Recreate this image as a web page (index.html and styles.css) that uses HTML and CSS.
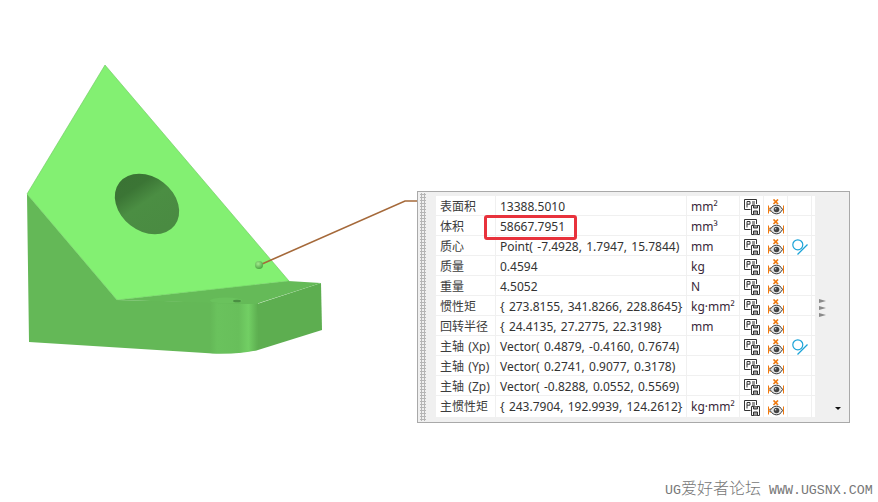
FILE: index.html
```html
<!DOCTYPE html>
<html lang="en">
<head>
  <meta charset="UTF-8" />
  <title>测量结果</title>
  <link rel="stylesheet" href="styles.css">
</head>
<body>
  <svg class="icon-defs" width="0" height="0">
    <symbol id="save" viewBox="0 0 16 16">
      <path d="M6.500 10.500H.5V.5h12v4.500" fill="#fff" stroke="#333" stroke-width="1"/>
      <path d="M3 8.500V2.500h3v2.700H3M8 3h3M8 5h3" fill="none" stroke="#333" stroke-width="1"/>
      <path d="M7.500 6.500h8v9h-8z" fill="#fff" stroke="#333" stroke-width="1"/>
      <path d="M9.500 6.500v2.500h4V6.500M9.500 15.500V12h4v3.500" fill="#999" stroke="#333" stroke-width="1"/>
    </symbol>
    <symbol id="eye" viewBox="0 0 16 16">
      <path d="M5.500.5l4.500 4.500M10 .5 5.500 5" stroke="#f07a10" stroke-width="1.700" fill="none"/>
      <path d="M.5 6.500v8M.5 10.500l2-2.300M.5 10.500l2 2.300M15.500 6.500v8" stroke="#f07a10" stroke-width="1" fill="none"/>
      <path d="M2 10.500C4 7.500 6 6.200 8.500 6.200s4.500 1.300 6 4.300c-1.500 3-3.500 4.300-6 4.300S4 13.500 2 10.500z" fill="#e8e8e8" stroke="#333" stroke-width="1"/>
      <circle cx="8.500" cy="10.500" r="2.800" fill="#444"/>
      <circle cx="7.600" cy="9.700" r="0.800" fill="#ddd"/>
    </symbol>
    <symbol id="probe" viewBox="0 0 16 16">
      <circle cx="5.800" cy="5.800" r="5" fill="none" stroke="#1ba3d8" stroke-width="1.200"/>
      <path d="M5.500 15.500 15.500 5.500" fill="none" stroke="#1ba3d8" stroke-width="1.200"/>
    </symbol>
  </svg>

  <div class="canvas">
    <svg class="model" width="878" height="502" viewBox="0 0 878 502">
      <defs>
        <linearGradient id="holeShade" x1="0" y1="0" x2="1" y2="0.250">
          <stop offset="0" stop-color="#3a7234"/>
          <stop offset="0.300" stop-color="#3b7535"/>
          <stop offset="0.550" stop-color="#4b8e43"/>
          <stop offset="1" stop-color="#4a8b42"/>
        </linearGradient>
        <linearGradient id="filletShade" x1="0" y1="0" x2="1" y2="0">
          <stop offset="0" stop-color="#64b857"/>
          <stop offset="0.150" stop-color="#6ac25d"/>
          <stop offset="0.600" stop-color="#68bf5b"/>
          <stop offset="0.800" stop-color="#72cf64"/>
          <stop offset="1" stop-color="#5dae50"/>
        </linearGradient>
        <radialGradient id="ball" cx="0.400" cy="0.350" r="0.700">
          <stop offset="0" stop-color="#a4ec8e"/>
          <stop offset="1" stop-color="#46a03e"/>
        </radialGradient>
      </defs>
      <!-- front and side faces -->
      <path d="M27 194 29 342 205 353 Q232 355 258 350L258 303 117 300z" fill="#64b857"/>
      <path d="M257 304 321 283 322 330 258 350z" fill="#5dae50"/>
      <path d="M210 303 257 304 258 350Q232 355 210 353z" fill="url(#filletShade)"/>
      <!-- plate top -->
      <path d="M117 300 288 281 321 283 262 302Q258 304 250 304z" fill="#65ba58"/>
      <ellipse cx="226" cy="300.500" rx="16" ry="3" fill="#6ac25d"/>
      <ellipse cx="237" cy="301" rx="4" ry="1.300" fill="#4a8f42"/>
      <!-- sloped face -->
      <path d="M105 65 27 194 117 300 289 281z" fill="#83f072" stroke="#6cc75e" stroke-width="0.600"/>
      <ellipse cx="147" cy="204" rx="35" ry="27" transform="rotate(38 147 204)" fill="url(#holeShade)"/>
      <!-- leader -->
      <path d="M262 264 405 201H417" fill="none" stroke="#a5693a" stroke-width="1.600"/>
      <circle cx="259" cy="265" r="4" fill="url(#ball)"/>
    </svg>

    <div class="panel">
      <div class="grip"></div>
      <div class="table">
        <div class="row"><div class="name">表面积</div><div class="value">13388.5010</div><div class="unit">mm²</div><div class="cell"><svg class="ic"><use href="#save"/></svg></div><div class="cell"><svg class="ic"><use href="#eye"/></svg></div><div class="cell"></div></div>
        <div class="row"><div class="name">体积</div><div class="value">58667.7951</div><div class="unit">mm³</div><div class="cell"><svg class="ic"><use href="#save"/></svg></div><div class="cell"><svg class="ic"><use href="#eye"/></svg></div><div class="cell"></div></div>
        <div class="row"><div class="name">质心</div><div class="value">Point( -7.4928, 1.7947, 15.7844)</div><div class="unit">mm</div><div class="cell"><svg class="ic"><use href="#save"/></svg></div><div class="cell"><svg class="ic"><use href="#eye"/></svg></div><div class="cell"><svg class="ic"><use href="#probe"/></svg></div></div>
        <div class="row"><div class="name">质量</div><div class="value">0.4594</div><div class="unit">kg</div><div class="cell"><svg class="ic"><use href="#save"/></svg></div><div class="cell"><svg class="ic"><use href="#eye"/></svg></div><div class="cell"></div></div>
        <div class="row"><div class="name">重量</div><div class="value">4.5052</div><div class="unit">N</div><div class="cell"><svg class="ic"><use href="#save"/></svg></div><div class="cell"><svg class="ic"><use href="#eye"/></svg></div><div class="cell"></div></div>
        <div class="row"><div class="name">惯性矩</div><div class="value">{ 273.8155, 341.8266, 228.8645}</div><div class="unit">kg·mm²</div><div class="cell"><svg class="ic"><use href="#save"/></svg></div><div class="cell"><svg class="ic"><use href="#eye"/></svg></div><div class="cell"></div></div>
        <div class="row"><div class="name">回转半径</div><div class="value">{ 24.4135, 27.2775, 22.3198}</div><div class="unit">mm</div><div class="cell"><svg class="ic"><use href="#save"/></svg></div><div class="cell"><svg class="ic"><use href="#eye"/></svg></div><div class="cell"></div></div>
        <div class="row"><div class="name">主轴 (Xp)</div><div class="value">Vector( 0.4879, -0.4160, 0.7674)</div><div class="unit"></div><div class="cell"><svg class="ic"><use href="#save"/></svg></div><div class="cell"><svg class="ic"><use href="#eye"/></svg></div><div class="cell"><svg class="ic"><use href="#probe"/></svg></div></div>
        <div class="row"><div class="name">主轴 (Yp)</div><div class="value">Vector( 0.2741, 0.9077, 0.3178)</div><div class="unit"></div><div class="cell"><svg class="ic"><use href="#save"/></svg></div><div class="cell"><svg class="ic"><use href="#eye"/></svg></div><div class="cell"></div></div>
        <div class="row"><div class="name">主轴 (Zp)</div><div class="value">Vector( -0.8288, 0.0552, 0.5569)</div><div class="unit"></div><div class="cell"><svg class="ic"><use href="#save"/></svg></div><div class="cell"><svg class="ic"><use href="#eye"/></svg></div><div class="cell"></div></div>
        <div class="row"><div class="name">主惯性矩</div><div class="value">{ 243.7904, 192.9939, 124.2612}</div><div class="unit">kg·mm²</div><div class="cell"><svg class="ic"><use href="#save"/></svg></div><div class="cell"><svg class="ic"><use href="#eye"/></svg></div><div class="cell"></div></div>
      </div>
      <div class="side">
        <div class="more"><span></span><span></span><span></span></div>
        <div class="drop"></div>
      </div>
      <div class="highlight"></div>
    </div>

    <div class="watermark"><span class="latin">UG</span><span class="cjk">爱好者论坛</span><span class="latin"> WWW.UGSNX.COM</span></div>
  </div>
</body>
</html>
```

FILE: styles.css
```css
* {
  box-sizing: border-box;
}

body {
  margin: 0;
  background: white;
  font-family: "Noto Sans", "Noto Sans CJK SC", sans-serif;
}

.icon-defs {
  position: absolute;
}

.canvas {
  position: relative;
  width: 878px;
  height: 502px;
  overflow: hidden;
}

.model {
  position: absolute;
  left: 0;
  top: 0;
}

.panel {
  position: absolute;
  left: 417px;
  top: 191px;
  width: 433px;
  height: 232px;
  display: flex;
  padding: 4px 0 4px 2px;
  background: #f0f0f0;
  border: 1px solid #a9a9a9;
}

.grip {
  width: 6px;
  margin: -3px 10px -3px 0;
  background-image: radial-gradient(#b5b5b5 1px, transparent 1.200px);
  background-size: 3px 3px;
}

.table {
  width: 379px;
  height: 221px;
  background: white;
}

.row {
  display: grid;
  grid-template-columns: 60px 191px 53px 24px 24px 24px;
  height: 20px;
  border-bottom: 1px solid #f0f0f0;
  font-size: 12px;
  line-height: 19px;
  word-spacing: 1.200px;
  color: #333;
}

.row:last-child {
  height: 21px;
  border-bottom: none;
}

.row > div {
  border-right: 1px solid #f0f0f0;
  white-space: nowrap;
}

.name {
  padding: 1px 0 0 4px;
  color: #3c3c3c;
}

.value {
  padding: 1px 0 0 4px;
}

.unit {
  padding: 1px 0 0 4px;
  color: #3a2a3a;
}

.cell {
  display: flex;
  align-items: center;
  justify-content: center;
  padding-top: 2px;
}

.ic {
  width: 16px;
  height: 16px;
}

.side {
  flex: 1;
  position: relative;
}

.more {
  display: flex;
  flex-direction: column;
  gap: 3px;
  margin: 103px 0 0 4px;
}

.more span {
  width: 0;
  height: 0;
  border-left: 7px solid #8a8a8a;
  border-top: 2px solid transparent;
  border-bottom: 2px solid transparent;
}

.drop {
  position: absolute;
  left: 20px;
  bottom: 8px;
  width: 0;
  height: 0;
  border-top: 3px solid #111;
  border-left: 3px solid transparent;
  border-right: 3px solid transparent;
}

.highlight {
  position: absolute;
  left: 66px;
  top: 23px;
  width: 93px;
  height: 25px;
  border: 3px solid #e8323c;
  border-radius: 3px;
}

.watermark {
  position: absolute;
  left: 665px;
  top: 478px;
  white-space: pre;
  color: #777;
  line-height: 18px;
}

.latin {
  font-family: "Liberation Mono", monospace;
  font-size: 13.300px;
}

.cjk {
  font-family: "Noto Sans CJK SC", sans-serif;
  font-size: 16px;
  font-weight: 300;
}
```
